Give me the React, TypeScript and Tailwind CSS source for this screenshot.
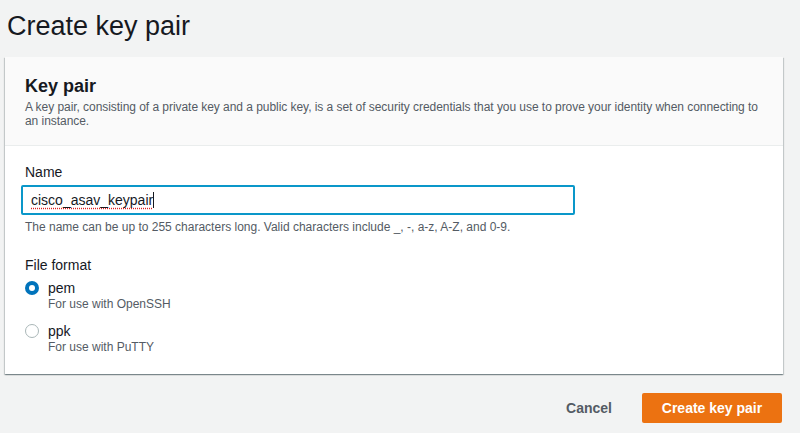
import React from "react";

export default function App() {
  const font = { fontFamily: '"Liberation Sans", Arial, sans-serif' };
  return (
    <div className="w-[800px] h-[433px] bg-[#f2f3f3] overflow-hidden text-[#16191f]" style={font}>
      <h1 className="pl-[7px] pt-[9px] h-[57px] text-[27px] leading-[34px] font-normal text-[#16191f]">Create key pair</h1>
      <div className="ml-[5px] w-[778px] h-[317px] bg-white shadow-[0_1px_1px_0_rgba(0,28,36,0.3),1px_1px_1px_0_rgba(0,28,36,0.15),-1px_1px_1px_0_rgba(0,28,36,0.15)] flex flex-col">
        <div className="h-[89px] bg-[#fafafa] border-b border-[#eaeded] px-[20px] pt-[18px]">
          <div className="text-[18px] leading-[22px] font-bold">Key pair</div>
          <p className="text-[12px] leading-[14px] text-[#545b64] mt-[3px] tracking-[-0.05px]">
            A key pair, consisting of a private key and a public key, is a set of security credentials that you use to prove your identity when connecting to an instance.
          </p>
        </div>
        <div className="px-[16px] pt-[17px]">
          <label className="block text-[14px] leading-[18px] pl-[4px]">Name</label>
          <div className="mt-[4px] w-[554px] h-[30px] border-2 border-[#0a97c9] rounded-[2px] flex items-center pl-[8px] text-[14px]">
            <span className="underline decoration-dotted decoration-[#e02020] underline-offset-[3px]">cisco_asav_keypair</span>
            <span className="w-px h-[16px] bg-[#16191f]" />
          </div>
          <p className="mt-[5px] pl-[4px] text-[12px] leading-[14px] text-[#545b64]">
            The name can be up to 255 characters long. Valid characters include _, -, a-z, A-Z, and 0-9.
          </p>
          <div className="mt-[22px] pl-[4px] text-[14px] leading-[18px]">File format</div>
          <div className="mt-[5px] pl-[4px] flex flex-col gap-[10px]">
            <div className="flex items-start gap-[9px]">
              <span className="mt-[2px] w-[14px] h-[14px] rounded-full bg-[#0073bb] flex items-center justify-center">
                <span className="w-[6px] h-[6px] rounded-full bg-white" />
              </span>
              <div>
                <div className="text-[14px] leading-[18px]">pem</div>
                <div className="text-[12px] leading-[15px] text-[#545b64]">For use with OpenSSH</div>
              </div>
            </div>
            <div className="flex items-start gap-[9px]">
              <span className="mt-[2px] w-[14px] h-[14px] rounded-full border border-[#aab7b8] bg-white" />
              <div>
                <div className="text-[14px] leading-[18px]">ppk</div>
                <div className="text-[12px] leading-[15px] text-[#545b64]">For use with PuTTY</div>
              </div>
            </div>
          </div>
        </div>
      </div>
      <div className="flex justify-end items-center pr-[18px] pt-[19px] gap-[30px]">
        <button className="text-[14px] font-bold text-[#545b64]">Cancel</button>
        <button className="w-[140px] h-[30px] bg-[#ec7211] rounded-[2px] text-white text-[14px] font-bold">Create key pair</button>
      </div>
    </div>
  );
}
